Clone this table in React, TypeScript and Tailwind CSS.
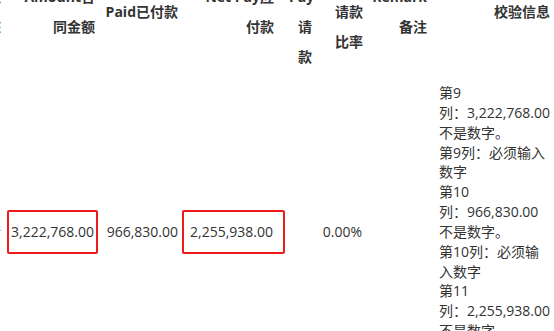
import React from 'react';

const checkLines = [
    '第9',
    '列：3,222,768.00',
    '不是数字。',
    '第9列：必须输入',
    '数字',
    '第10',
    '列：966,830.00',
    '不是数字。',
    '第10列：必须输',
    '入数字',
    '第11',
    '列：2,255,938.00',
    '不是数字。',
    '第11列：必须输',
    '入数字',
];

const font = "font-['Open_Sans','Noto_Sans_CJK_SC',sans-serif]";
const th = `${font} text-right align-middle font-bold text-[14px] leading-[30px] py-[3px] text-[#333] whitespace-nowrap`;
const td = `${font} align-middle text-[14px] leading-[19.85px] py-[8px] text-[#333]`;

export default function App() {
    return (
        <div className={`h-[331px] w-[554px] overflow-hidden bg-white ${font}`}>
            <table className={`-mt-[51px] -ml-[41px] w-[602px] table-fixed border-separate border-spacing-0 ${font}`}>
                <colgroup>
                    <col className="w-[42px]" />
                    <col className="w-[102px]" />
                    <col className="w-[79px]" />
                    <col className="w-[107px]" />
                    <col className="w-[27px]" />
                    <col className="w-[51px]" />
                    <col className="w-[64px]" />
                    <col className="w-[130px]" />
                </colgroup>
                <thead>
                    <tr>
                        <th className={`${th} pr-0 text-[#9fd4f5]`}>
                            状<br />态
                        </th>
                        <th className={`${th} pr-[8px]`}>
                            Amount合<br />同金额
                        </th>
                        <th className={`${th} pr-[4px]`}>Paid已付款</th>
                        <th className={`${th} pr-[15px]`}>
                            Net Pay应<br />付款
                        </th>
                        <th className={`${th} pr-[4px]`}>
                            Req<br />Pay<br />请<br />款
                        </th>
                        <th className={`${th} pr-[4px]`}>
                            Rate<br />请款<br />比率
                        </th>
                        <th className={`${th} pr-[4px]`}>
                            Remark<br />备注
                        </th>
                        <th className={`${th} pr-[11px]`}>校验信息</th>
                    </tr>
                </thead>
                <tbody>
                    <tr>
                        <td className={`${td} pr-0 text-right text-[#9fd4f5]`}>详情</td>
                        <td className={`${td} pl-[6px] text-left`}>
                            <div className="inline-block w-[91px] rounded-[2px] border-2 border-[#ec1c1c] py-[10px] pl-[2px]">
                                3,222,768.00
                            </div>
                        </td>
                        <td className={`${td} pr-[4px] text-right`}>966,830.00</td>
                        <td className={`${td} text-left`}>
                            <div className="inline-block w-[103px] rounded-[2px] border-2 border-[#ec1c1c] py-[10px] pl-[6px]">
                                2,255,938.00
                            </div>
                        </td>
                        <td className={td}></td>
                        <td className={`${td} pr-[5px] text-right`}>0.00%</td>
                        <td className={td}></td>
                        <td className={`${td} pl-[8px] text-left`}>
                            {checkLines.map((line, i) => (
                                <div key={i} className="whitespace-nowrap">
                                    {line}
                                </div>
                            ))}
                        </td>
                    </tr>
                </tbody>
            </table>
        </div>
    );
}
